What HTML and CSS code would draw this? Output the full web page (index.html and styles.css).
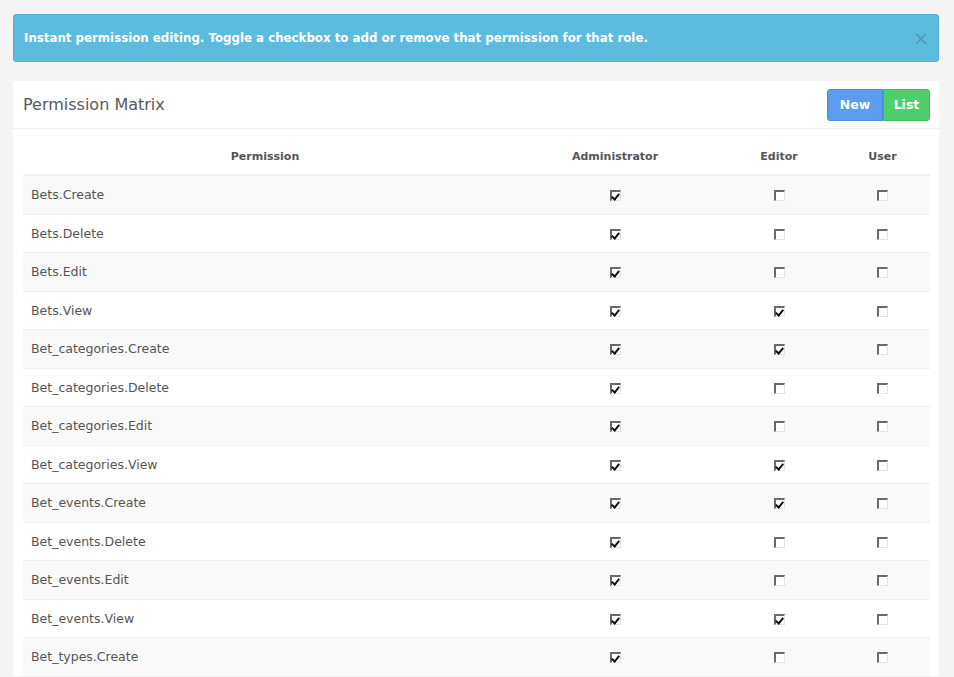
FILE: index.html
```html
<!DOCTYPE html>
<html>
<head>
<meta charset="utf-8">
<link rel="stylesheet" href="styles.css">
</head>
<body>
<div class="alert">
  <span class="alert-text">Instant permission editing. Toggle a checkbox to add or remove that permission for that role.</span>
  <span class="close">&times;</span>
</div>
<div class="panel">
  <div class="panel-heading">
    <h3 class="panel-title">Permission Matrix</h3>
    <div class="btn-group">
      <a class="btn btn-new">New</a><a class="btn btn-list">List</a>
    </div>
  </div>
  <div class="panel-body">
    <table class="matrix">
      <colgroup>
        <col class="c-perm"><col class="c-admin"><col class="c-editor"><col class="c-user">
      </colgroup>
      <thead>
        <tr><th>Permission</th><th>Administrator</th><th>Editor</th><th>User</th></tr>
      </thead>
      <tbody>
        <tr><td>Bets.Create</td><td class="cc"><span class="cb on"></span></td><td class="cc"><span class="cb"></span></td><td class="cc"><span class="cb"></span></td></tr>
        <tr><td>Bets.Delete</td><td class="cc"><span class="cb on"></span></td><td class="cc"><span class="cb"></span></td><td class="cc"><span class="cb"></span></td></tr>
        <tr><td>Bets.Edit</td><td class="cc"><span class="cb on"></span></td><td class="cc"><span class="cb"></span></td><td class="cc"><span class="cb"></span></td></tr>
        <tr><td>Bets.View</td><td class="cc"><span class="cb on"></span></td><td class="cc"><span class="cb on"></span></td><td class="cc"><span class="cb"></span></td></tr>
        <tr><td>Bet_categories.Create</td><td class="cc"><span class="cb on"></span></td><td class="cc"><span class="cb on"></span></td><td class="cc"><span class="cb"></span></td></tr>
        <tr><td>Bet_categories.Delete</td><td class="cc"><span class="cb on"></span></td><td class="cc"><span class="cb"></span></td><td class="cc"><span class="cb"></span></td></tr>
        <tr><td>Bet_categories.Edit</td><td class="cc"><span class="cb on"></span></td><td class="cc"><span class="cb"></span></td><td class="cc"><span class="cb"></span></td></tr>
        <tr><td>Bet_categories.View</td><td class="cc"><span class="cb on"></span></td><td class="cc"><span class="cb on"></span></td><td class="cc"><span class="cb"></span></td></tr>
        <tr><td>Bet_events.Create</td><td class="cc"><span class="cb on"></span></td><td class="cc"><span class="cb on"></span></td><td class="cc"><span class="cb"></span></td></tr>
        <tr><td>Bet_events.Delete</td><td class="cc"><span class="cb on"></span></td><td class="cc"><span class="cb"></span></td><td class="cc"><span class="cb"></span></td></tr>
        <tr><td>Bet_events.Edit</td><td class="cc"><span class="cb on"></span></td><td class="cc"><span class="cb"></span></td><td class="cc"><span class="cb"></span></td></tr>
        <tr><td>Bet_events.View</td><td class="cc"><span class="cb on"></span></td><td class="cc"><span class="cb on"></span></td><td class="cc"><span class="cb"></span></td></tr>
        <tr><td>Bet_types.Create</td><td class="cc"><span class="cb on"></span></td><td class="cc"><span class="cb"></span></td><td class="cc"><span class="cb"></span></td></tr>
      </tbody>
    </table>
  </div>
</div>
</body>
</html>
```
FILE: styles.css
```css
html, body {
  margin: 0;
  background: #f4f4f4;
}
body {
  padding: 14px 15px 0 13px;
  font-family: "DejaVu Sans", "Open Sans", sans-serif;
  font-size: 12.5px;
  color: #555;
  overflow: hidden;
}
.alert {
  display: flex;
  align-items: center;
  justify-content: space-between;
  height: 48px;
  box-sizing: border-box;
  padding: 0 9px 0 10px;
  background: #5bbcdf;
  border: 1px solid #50b2d8;
  border-radius: 3px;
  color: #fff;
  font-weight: bold;
  font-size: 11.8px;
  margin-bottom: 19px;
}
.close {
  color: #4d9dbb;
  font-size: 19px;
  font-weight: normal;
  line-height: 1;
}
.panel {
  background: #fff;
}
.panel-heading {
  display: flex;
  align-items: center;
  justify-content: space-between;
  height: 48px;
  box-sizing: border-box;
  padding: 0 9px 0 10px;
  border-bottom: 1px solid #f0f0f0;
}
.panel-title {
  margin: 0;
  font-size: 16px;
  font-weight: normal;
  color: #5a5a5a;
}
.btn-group {
  display: flex;
}
.btn {
  display: block;
  height: 32px;
  box-sizing: border-box;
  line-height: 30px;
  text-align: center;
  color: #fff;
  font-weight: bold;
  font-size: 12.5px;
  border: 1px solid;
}
.btn-new {
  width: 56px;
  background: #5d9cec;
  border-color: #4a89dc;
  border-radius: 3px 0 0 3px;
}
.btn-list {
  width: 47px;
  background: #4ecf6c;
  border-color: #3cc05a;
  border-radius: 0 3px 3px 0;
}
.panel-body {
  padding: 11px 9px 0 10px;
}
.matrix {
  width: 100%;
  border-collapse: collapse;
}
.c-perm { width: 484px; }
.c-admin { width: 216px; }
.c-editor { width: 112px; }
.matrix th {
  font-weight: bold;
  font-size: 11px;
  color: #555;
  text-align: center;
  padding: 8px 8px;
  line-height: 18px;
  border-bottom: 2px solid #f2f2f2;
}
.matrix td {
  padding: 10px 8px;
  line-height: 17.5px;
  border-top: 1px solid #f0f0f0;
  color: #555;
}
.matrix tbody tr:nth-child(odd) td {
  background: #f9f9f9;
}
.matrix td.cc {
  text-align: center;
}
.cb {
  display: inline-block;
  vertical-align: middle;
  width: 11px;
  height: 11px;
  box-sizing: border-box;
  border-top: 2px solid #6a6a6a;
  border-left: 2px solid #6a6a6a;
  border-right: 1px solid #e4e4e4;
  border-bottom: 1px solid #e4e4e4;
  background: #fff;
  position: relative;
}
.cb.on::after {
  content: "";
  position: absolute;
  left: 1px;
  top: 0px;
  width: 3px;
  height: 6px;
  border-right: 2px solid #111;
  border-bottom: 2px solid #111;
  transform: rotate(40deg);
}
```
